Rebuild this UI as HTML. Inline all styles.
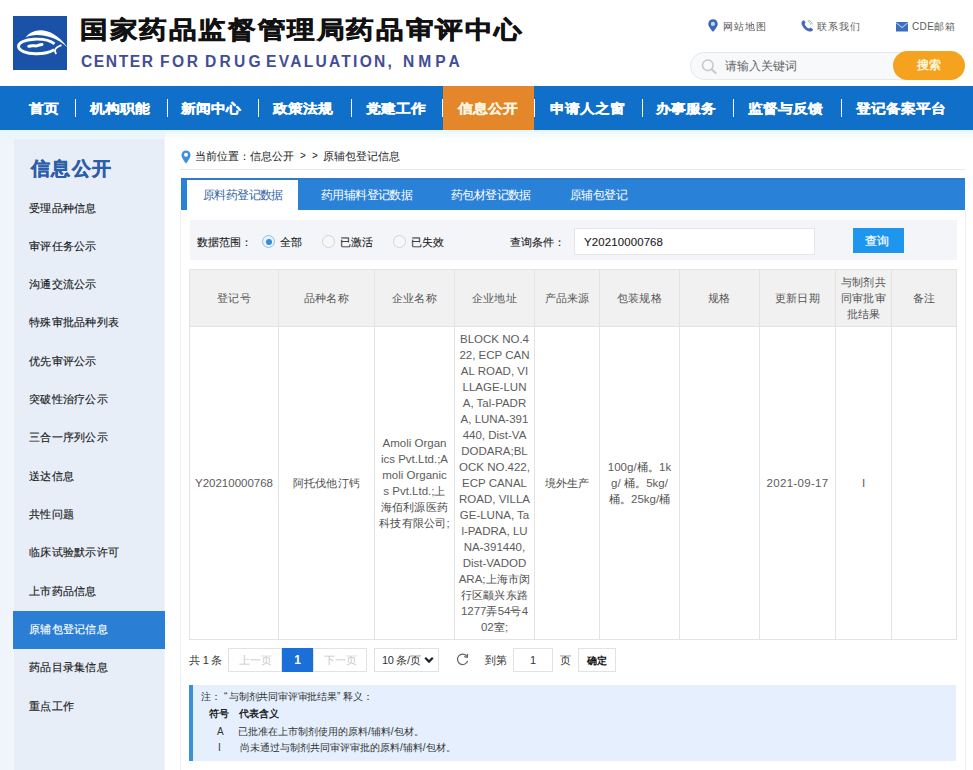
<!DOCTYPE html>
<html><head><meta charset="utf-8">
<style>
*{margin:0;padding:0;box-sizing:border-box}
html,body{width:973px;height:770px;overflow:hidden;background:#f0f5fc;font-family:"Liberation Sans",sans-serif;color:#333}
.abs{position:absolute}
#hdr{position:absolute;left:0;top:0;width:973px;height:86px;background:#fff}
#logo{position:absolute;left:13px;top:16px;width:54px;height:54px}
#title{position:absolute;left:80px;top:11px;transform:scaleY(0.87);transform-origin:0 50%;font-size:28px;font-weight:bold;color:#111;white-space:nowrap;letter-spacing:1.6px;-webkit-text-stroke:0.7px #111}
#etitle{position:absolute;left:81px;top:53px;font-size:15.6px;font-weight:bold;color:#434d96;white-space:nowrap}
#etitle span{position:absolute;top:0}
.toplink{position:absolute;top:20px;font-size:10px;letter-spacing:1px;line-height:14px;color:#5a5a5a;white-space:nowrap}
#search{position:absolute;left:690px;top:52px;width:260px;height:28px;border:1px solid #e6e8ec;border-radius:14px;background:#f8f9fb}
#sbtn{position:absolute;left:893px;top:51px;width:72px;height:29px;border-radius:14.5px;background:#f5a21e;color:#fff6dc;font-size:12px;font-weight:bold;text-align:center;line-height:29px}
#nav{position:absolute;left:0;top:86px;width:973px;height:44px;background:#106fc8}
.ni{position:absolute;top:0;height:44px;line-height:44px;color:#fff;font-size:15px;font-weight:bold;white-space:nowrap;-webkit-text-stroke:0.3px #fff;transform:scaleY(0.88);transform-origin:0 56%}
.sep{position:absolute;top:13px;width:1px;height:18px;background:#fff}
#side{position:absolute;left:14px;top:139px;width:150px;height:631px;background:#e7eef8}
.si{position:absolute;left:15px;font-size:11px;letter-spacing:0.25px;line-height:16px;color:#1a1a1a;-webkit-text-stroke:0.15px;white-space:nowrap}
.sh{position:absolute;left:17px;top:17px;font-size:19px;letter-spacing:1.4px;font-weight:bold;color:#2c5ea9;white-space:nowrap;line-height:26px;-webkit-text-stroke:0.4px #2c5ea9}
#main{position:absolute;left:165px;top:139px;width:808px;height:631px;background:#fff}

.crumb{font-size:11.6px;color:#222;white-space:nowrap;line-height:16px}
#tabs{position:absolute;left:16px;top:39px;width:784px;height:32px;background:#2a82d8;border-top:2px solid #3079c6}
.tab{position:absolute;top:-1px;line-height:32px;font-size:12px;letter-spacing:-0.6px;color:#fff;white-space:nowrap}
#filter{position:absolute;left:25px;top:81px;width:767px;height:40px;background:#f3f5f9}
.ft{top:14px;font-size:11.4px;line-height:16px;color:#222;-webkit-text-stroke:0.1px;white-space:nowrap}
.radio{position:absolute;top:15px;width:13px;height:13px;border:1px solid #d2d4d8;border-radius:50%;background:#f7f7f8}
.radio.on{border-color:#8fc0ec;background:#e6f3fc}
.radio.on::after{content:"";position:absolute;left:2.5px;top:2.5px;width:6px;height:6px;border-radius:50%;background:#3c8ccf}

.gl{background:#e3e3e3}
.cell{position:absolute;display:flex;align-items:center;justify-content:center;text-align:center}
.th span{font-size:11px;letter-spacing:0.2px;line-height:16px;color:#555}
.td span{font-size:11.5px;line-height:16px;color:#5c5c5c}

.pt{font-size:11px;letter-spacing:-0.2px;color:#333;line-height:16px;white-space:nowrap}
.pbox{position:absolute;top:648px;height:24px;border:1px solid #e2e2e2;background:#fff;font-size:11px;line-height:22px;text-align:center;white-space:nowrap}
#note{position:absolute;left:189px;top:685px;width:767px;height:76px;background:#e5effd}
.nt{font-size:10px;line-height:16px;color:#333;white-space:nowrap}
.c{font-weight:normal;font-size:11px;letter-spacing:0.2px;color:#4a4a4a}
</style></head><body>
<div id="hdr">
  <svg id="logo" width="54" height="54" viewBox="0 0 54 54"><rect width="54" height="54" fill="#1a52a8"/>
  <path d="M12.5 21.5C20 12 38 9 54.5 31.5C43 19.5 22 16 12.5 21.5Z" fill="#fff"/>
  <path d="M41.5 27.8C36 23.5 28 22.8 21 23.2C12 23.8 5.5 26.5 5.5 30.3C5.5 34.5 13 37.6 22.5 37.8C31 38 37.5 36 41.2 33.8" fill="none" stroke="#fff" stroke-width="2.9"/>
  <path d="M48.5 29.2C45.5 30.2 42.5 32.2 42 34.2C41.8 35.5 42.5 37 43.2 38" fill="none" stroke="#fff" stroke-width="1.9"/>
  <path d="M15.8 30.3C18 29.2 21 29.8 23 29.9C25.5 30 26 28.6 29 28.4" fill="none" stroke="#fff" stroke-width="3" stroke-linecap="round"/>
</svg>
  <div id="title">国家药品监督管理局药品审评中心</div>
  <div id="etitle"><span style="left:0;letter-spacing:1.6px">CENTER</span><span style="left:79px;letter-spacing:2.5px">FOR</span><span style="left:124px;letter-spacing:3.2px">DRUG</span><span style="left:185px;letter-spacing:2.25px">EVALUATION,</span><span style="left:322px;letter-spacing:4px">NMPA</span></div>
  <div class="toplink" style="left:723px">网站地图</div>
  <div class="toplink" style="left:817px">联系我们</div>
  <div class="toplink" style="left:912px;letter-spacing:0.4px">CDE邮箱</div>
  <div id="search"></div>
  <div id="sbtn">搜索</div>
  <svg class="abs" style="left:708px;top:19px" width="10" height="13" viewBox="0 0 10 13"><path d="M5 0.3C2.3 0.3 0.3 2.3 0.3 4.9C0.3 7.8 5 12.8 5 12.8S9.7 7.8 9.7 4.9C9.7 2.3 7.7 0.3 5 0.3Z" fill="#4363b9"/><circle cx="4.9" cy="4.9" r="2.1" fill="#9fe4f7"/></svg>
  <svg class="abs" style="left:801px;top:20px" width="13" height="12" viewBox="0 0 13 12"><path d="M2.2 0.6C1 1.2 0.2 2.3 0.6 4C1.6 7.5 4.8 10.6 8.2 11.5C9.8 11.9 11 11.2 11.8 10.2L12 9.3L9.6 7.6L8.3 8.6C6.2 7.9 4.4 6 3.6 3.9L4.6 2.6L3.1 0.3Z" fill="#4768b5"/><path d="M6.8 1.5C8.3 1.8 9.6 3 9.9 4.6M7.2 0.2C9.3 0.5 11 2.2 11.4 4.3" fill="none" stroke="#7bb0a8" stroke-width="0.8"/></svg>
  <svg class="abs" style="left:896px;top:22px" width="12" height="10" viewBox="0 0 12 10"><rect x="0" y="0" width="12" height="9.5" fill="#3e6dbf"/><path d="M0.3 0.8L6 5.6L11.7 0.8" fill="none" stroke="#a9cdf5" stroke-width="1.1"/></svg>
  <svg class="abs" style="left:701px;top:59px" width="16" height="15" viewBox="0 0 16 15"><circle cx="6.8" cy="6.3" r="5.3" fill="none" stroke="#c6c9cd" stroke-width="1.6"/><path d="M10.6 10.2L14.6 14" stroke="#c6c9cd" stroke-width="2" stroke-linecap="round"/></svg>
  <div class="abs" style="left:725px;top:58px;font-size:12px;line-height:16px;color:#666;white-space:nowrap">请输入关键词</div>

</div>
<div id="nav">
  <div class="ni" style="left:29px">首页</div><div class="sep" style="left:75px"></div>
  <div class="ni" style="left:90px">机构职能</div><div class="sep" style="left:167px"></div>
  <div class="ni" style="left:181px">新闻中心</div><div class="sep" style="left:258px"></div>
  <div class="ni" style="left:273px">政策法规</div><div class="sep" style="left:351px"></div>
  <div class="ni" style="left:366px">党建工作</div><div class="sep" style="left:442px"></div>
  <div style="position:absolute;left:443px;top:0;width:91px;height:44px;background:#e4872a"></div>
  <div class="ni" style="left:458px;color:#fff6e2;-webkit-text-stroke-color:#fff6e2">信息公开</div><div class="sep" style="left:534px"></div>
  <div class="ni" style="left:550px">申请人之窗</div><div class="sep" style="left:642px"></div>
  <div class="ni" style="left:656px">办事服务</div><div class="sep" style="left:733px"></div>
  <div class="ni" style="left:748px">监督与反馈</div><div class="sep" style="left:841px"></div>
  <div class="ni" style="left:856px">登记备案平台</div>
</div>
<div class="abs" style="left:0;top:130px;width:973px;height:9px;background:linear-gradient(#e4f7fb,#f0f5fc)"></div>
<div class="abs" style="left:165px;top:130px;width:808px;height:9px;background:linear-gradient(#e4f7fb,#f4fafd 50%,#fff)"></div>
<div id="side">
  <div class="sh">信息公开</div>
  <div style="position:absolute;left:-1px;top:472px;width:152px;height:38px;background:#2a7fd4"></div>
  <div class="si" style="top:61px">受理品种信息</div>
  <div class="si" style="top:99px">审评任务公示</div>
  <div class="si" style="top:137px">沟通交流公示</div>
  <div class="si" style="top:175px">特殊审批品种列表</div>
  <div class="si" style="top:214px">优先审评公示</div>
  <div class="si" style="top:252px">突破性治疗公示</div>
  <div class="si" style="top:290px">三合一序列公示</div>
  <div class="si" style="top:329px">送达信息</div>
  <div class="si" style="top:367px">共性问题</div>
  <div class="si" style="top:405px">临床试验默示许可</div>
  <div class="si" style="top:444px">上市药品信息</div>
  <div class="si" style="top:482px;color:#fff">原辅包登记信息</div>
  <div class="si" style="top:520px">药品目录集信息</div>
  <div class="si" style="top:559px">重点工作</div>
</div>
<div id="main">
  <svg class="abs" style="left:16px;top:11px" width="10" height="14" viewBox="0 0 10 14"><path d="M5 0.5C2.4 0.5 0.5 2.4 0.5 4.9C0.5 8 5 13.5 5 13.5S9.5 8 9.5 4.9C9.5 2.4 7.6 0.5 5 0.5Z" fill="#3d8ee0"/><circle cx="5" cy="4.8" r="2" fill="#fff"/></svg>
  <div class="abs crumb" style="left:30px;top:9px;font-size:11.4px">当前位置：信息公开</div><div class="abs crumb" style="left:135px;top:9px;font-size:10px">&gt;</div><div class="abs crumb" style="left:147px;top:9px;font-size:10px">&gt;</div><div class="abs crumb" style="left:158px;top:9px;font-size:11.2px">原辅包登记信息</div>
  <div class="abs" style="left:15px;top:30px;width:785px;height:1px;background:#e8e8e8"></div>
  <div class="abs" style="left:15px;top:71px;width:786px;height:600px;border:1px solid #eef0f3;border-top:none"></div>
  <div id="tabs">
    <div class="abs" style="left:6px;top:0px;width:111px;height:30px;background:#fff"></div>
    <div class="tab" style="left:22px;color:#3565a5">原料药登记数据</div>
    <div class="tab" style="left:140px">药用辅料登记数据</div>
    <div class="tab" style="left:270px">药包材登记数据</div>
    <div class="tab" style="left:389px">原辅包登记</div>
  </div>
  <div id="filter">
    <div class="abs ft" style="left:7px">数据范围：</div>
    <div class="radio on" style="left:72px"></div><div class="abs ft" style="left:90px">全部</div>
    <div class="radio" style="left:132px"></div><div class="abs ft" style="left:150px">已激活</div>
    <div class="radio" style="left:203px"></div><div class="abs ft" style="left:221px">已失效</div>
    <div class="abs ft" style="left:320px">查询条件：</div>
    <div class="abs" style="left:384px;top:8px;width:241px;height:27px;background:#fff;border:1px solid #e4e6ea"></div>
    <div class="abs ft" style="left:394px;color:#222;letter-spacing:0.15px">Y20210000768</div>
    <div class="abs" style="left:663px;top:8px;width:51px;height:25px;background:#1e96ee;color:#fff;font-size:12px;line-height:27px;text-align:center;padding-right:3px;-webkit-text-stroke:0.2px">查询</div>
  </div>
</div>
<div id="tbl">
<div class="abs" style="left:189px;top:269px;width:768px;height:57px;background:#f1f1f1"></div>
<div class="abs gl" style="left:189px;top:269px;width:1px;height:371px"></div>
<div class="abs gl" style="left:278px;top:269px;width:1px;height:371px"></div>
<div class="abs gl" style="left:374px;top:269px;width:1px;height:371px"></div>
<div class="abs gl" style="left:454px;top:269px;width:1px;height:371px"></div>
<div class="abs gl" style="left:534px;top:269px;width:1px;height:371px"></div>
<div class="abs gl" style="left:599px;top:269px;width:1px;height:371px"></div>
<div class="abs gl" style="left:679px;top:269px;width:1px;height:371px"></div>
<div class="abs gl" style="left:759px;top:269px;width:1px;height:371px"></div>
<div class="abs gl" style="left:835px;top:269px;width:1px;height:371px"></div>
<div class="abs gl" style="left:891px;top:269px;width:1px;height:371px"></div>
<div class="abs gl" style="left:956px;top:269px;width:1px;height:371px"></div>
<div class="abs gl" style="left:189px;top:269px;width:768px;height:1px"></div>
<div class="abs gl" style="left:189px;top:326px;width:768px;height:1px"></div>
<div class="abs gl" style="left:189px;top:639px;width:768px;height:1px"></div>
<div class="cell th" style="left:190px;top:270px;width:88px;height:56px"><span>登记号</span></div>
<div class="cell th" style="left:279px;top:270px;width:95px;height:56px"><span>品种名称</span></div>
<div class="cell th" style="left:375px;top:270px;width:79px;height:56px"><span>企业名称</span></div>
<div class="cell th" style="left:455px;top:270px;width:79px;height:56px"><span>企业地址</span></div>
<div class="cell th" style="left:535px;top:270px;width:64px;height:56px"><span>产品来源</span></div>
<div class="cell th" style="left:600px;top:270px;width:79px;height:56px"><span>包装规格</span></div>
<div class="cell th" style="left:680px;top:270px;width:79px;height:56px"><span>规格</span></div>
<div class="cell th" style="left:760px;top:270px;width:75px;height:56px"><span>更新日期</span></div>
<div class="cell th" style="left:836px;top:270px;width:55px;height:56px"><span>与制剂共<br>同审批审<br>批结果</span></div>
<div class="cell th" style="left:892px;top:270px;width:64px;height:56px"><span>备注</span></div>
<div class="cell td" style="left:190px;top:327px;width:88px;height:312px"><span>Y20210000768</span></div>
<div class="cell td" style="left:279px;top:327px;width:95px;height:312px"><span><b class="c">阿托伐他汀钙</b></span></div>
<div class="cell td" style="left:375px;top:327px;width:79px;height:312px"><span>Amoli Organ<br>ics Pvt.Ltd.;A<br>moli Organic<br>s Pvt.Ltd.;<b class="c">上</b><br><b class="c">海佰利源医药</b><br><b class="c">科技有限公司</b>;</span></div>
<div class="cell td" style="left:455px;top:327px;width:79px;height:312px"><span>BLOCK NO.4<br>22, ECP CAN<br>AL ROAD, VI<br>LLAGE-LUN<br>A, Tal-PADR<br>A, LUNA-391<br>440, Dist-VA<br>DODARA;BL<br>OCK NO.422,<br>ECP CANAL<br>ROAD, VILLA<br>GE-LUNA, Ta<br>l-PADRA, LU<br>NA-391440,<br>Dist-VADOD<br>ARA;<b class="c">上海市闵</b><br><b class="c">行区颛兴东路</b><br>1277<b class="c">弄</b>54<b class="c">号</b>4<br>02<b class="c">室</b>;</span></div>
<div class="cell td" style="left:535px;top:327px;width:64px;height:312px"><span><b class="c">境外生产</b></span></div>
<div class="cell td" style="left:600px;top:327px;width:79px;height:312px"><span>100g/<b class="c">桶。</b>1k<br>g/ <b class="c">桶。</b>5kg/<br><b class="c">桶。</b>25kg/<b class="c">桶</b></span></div>
<div class="cell td" style="left:680px;top:327px;width:79px;height:312px"><span></span></div>
<div class="cell td" style="left:760px;top:327px;width:75px;height:312px"><span style="letter-spacing:0.3px">2021-09-17</span></div>
<div class="cell td" style="left:836px;top:327px;width:55px;height:312px"><span>I</span></div>
<div class="cell td" style="left:892px;top:327px;width:64px;height:312px"><span></span></div>
</div>
<div id="pag">
  <div class="abs pt" style="left:189px;top:652px">共 1 条</div>
  <div class="abs pbox" style="left:228px;width:54px;color:#c8c8c8">上一页</div>
  <div class="abs" style="left:282px;top:648px;width:31px;height:24px;background:#1b6fd9;color:#fff;font-size:12px;font-weight:bold;line-height:24px;text-align:center">1</div>
  <div class="abs pbox" style="left:313px;width:54px;color:#c8c8c8">下一页</div>
  <div class="abs pbox" style="left:374px;width:65px;color:#333;text-align:left;padding-left:7px;letter-spacing:-0.3px">10 条/页</div>
  <svg class="abs" style="left:424px;top:656px" width="10" height="8" viewBox="0 0 10 8"><path d="M1.2 1.8L5 5.6L8.8 1.8" fill="none" stroke="#222" stroke-width="2.2"/></svg>
  <svg class="abs" style="left:455px;top:653px" width="15" height="13" viewBox="0 0 15 13"><path d="M11.8 3.2A5.2 5.2 0 1 0 12.6 8" fill="none" stroke="#666" stroke-width="1.2"/><path d="M12.6 0.8L12.4 4.2L9.2 3.6" fill="none" stroke="#666" stroke-width="1.2"/></svg>
  <div class="abs pt" style="left:485px;top:652px">到第</div>
  <div class="abs pbox" style="left:513px;width:40px;color:#333">1</div>
  <div class="abs pt" style="left:560px;top:652px">页</div>
  <div class="abs pbox" style="left:578px;width:38px;color:#111;font-size:10px;font-weight:bold;line-height:23px">确定</div>
</div>
<div id="note">
  <div class="abs" style="left:0;top:0;width:4px;height:76px;background:#3a8fd8"></div>
  <div class="abs nt" style="left:12px;top:4px">注：</div><div class="abs nt" style="left:35px;top:4px">“</div><div class="abs nt" style="left:40px;top:4px;letter-spacing:-0.2px">与制剂共同审评审批结果</div><div class="abs nt" style="left:148px;top:4px">”</div><div class="abs nt" style="left:154px;top:4px">释义：</div>
  <div class="abs nt" style="left:20px;top:21px;font-weight:bold;color:#222">符号</div>
  <div class="abs nt" style="left:50px;top:21px;font-weight:bold;color:#222">代表含义</div>
  <div class="abs nt" style="left:28px;top:39px">A</div>
  <div class="abs nt" style="left:49px;top:39px">已批准在上市制剂使用的原料/辅料/包材。</div>
  <div class="abs nt" style="left:29px;top:55px">I</div>
  <div class="abs nt" style="left:51px;top:55px">尚未通过与制剂共同审评审批的原料/辅料/包材。</div>
</div>
</body></html>
